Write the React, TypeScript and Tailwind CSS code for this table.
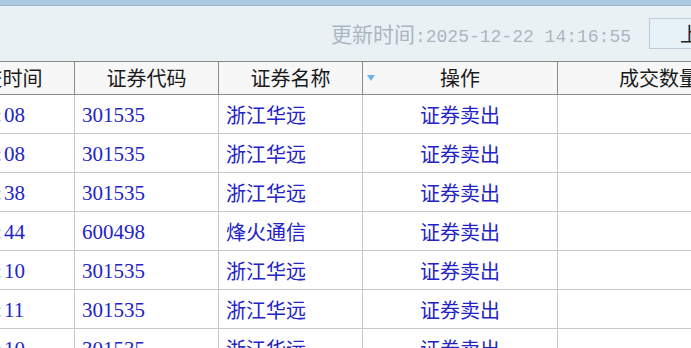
import React from 'react';

// 成交明细表 (横向滚动后的视图)
const rows = [
    { time: '14:16:08', code: '301535', name: '浙江华远', op: '证券卖出' },
    { time: '14:16:08', code: '301535', name: '浙江华远', op: '证券卖出' },
    { time: '14:16:38', code: '301535', name: '浙江华远', op: '证券卖出' },
    { time: '14:16:44', code: '600498', name: '烽火通信', op: '证券卖出' },
    { time: '14:16:10', code: '301535', name: '浙江华远', op: '证券卖出' },
    { time: '14:16:11', code: '301535', name: '浙江华远', op: '证券卖出' },
    { time: '14:16:10', code: '301535', name: '浙江华远', op: '证券卖出' },
];

const cjk = "font-['Noto_Sans_CJK_SC',sans-serif]";
const num = "font-['Liberation_Serif','Noto_Sans_CJK_SC',serif] text-[21px] pt-[3px]";

// 半角冒号占一个数字宽, 模拟宋体等宽效果
function TimeText({ value }: { value: string }) {
    const parts = value.split(':');
    return (
        <span className="whitespace-nowrap">
            {parts.map((p, i) => (
                <React.Fragment key={i}>
                    {i > 0 && <span className="inline-block w-[10px] text-center">:</span>}
                    {p}
                </React.Fragment>
            ))}
        </span>
    );
}

export default function App() {
    return (
        <div className={`w-[691px] h-[348px] overflow-hidden bg-white ${cjk}`}>
            <div className="h-[6px] bg-[#abc8e2] border-b border-[#9fb4c7]" />

            {/* 工具栏 */}
            <div className="h-[55px] bg-[#eaf1f5] flex items-center">
                <div className="flex-1" />
                <div className="text-[#aab6c2] flex items-baseline whitespace-nowrap pt-[2px]">
                    <span className="text-[21px]">更新时间</span>
                    <span className="font-['Liberation_Mono',monospace] text-[18px]">:2025-12-22 14:16:55</span>
                </div>
                <button className="ml-[18px] mr-[-58px] w-[100px] h-[31px] shrink-0 border border-[#bfcbd6] bg-[#e7f1f8] text-[20px] text-[#222] text-left pl-[30px] leading-none whitespace-nowrap">
                    上一页
                </button>
            </div>

            {/* 表格 */}
            <div className="ml-[-69px] w-[900px] text-[20px]">
                <div className="flex h-[34px] bg-[#f7f7f7] border-y border-[#8a8a8a] text-[#1a1a1a]">
                    <div className="w-[144px] shrink-0 border-r border-[#8a8a8a] flex items-center justify-center">成交时间</div>
                    <div className="w-[144px] shrink-0 border-r border-[#8a8a8a] flex items-center justify-center">证券代码</div>
                    <div className="w-[144px] shrink-0 border-r border-[#8a8a8a] flex items-center justify-center">证券名称</div>
                    <div className="relative w-[195px] shrink-0 border-r border-[#8a8a8a] flex items-center justify-center">
                        <span className="absolute left-[4px] top-[13px] w-0 h-0 border-x-[4px] border-x-transparent border-t-[6px] border-t-[#6fb2ea]" />
                        操作
                    </div>
                    <div className="w-[202px] shrink-0 flex items-center justify-center">成交数量</div>
                </div>

                {rows.map((r, i) => (
                    <div key={i} className="flex h-[39px] border-b border-[#c8c8c8] text-[#2323c8]">
                        <div className={`w-[144px] shrink-0 border-r border-[#c8c8c8] flex items-center pl-[11px] ${num}`}>
                            <TimeText value={r.time} />
                        </div>
                        <div className={`w-[144px] shrink-0 border-r border-[#c8c8c8] flex items-center pl-[7px] ${num}`}>{r.code}</div>
                        <div className="w-[144px] shrink-0 border-r border-[#c8c8c8] flex items-center pl-[7px] pt-[2px]">{r.name}</div>
                        <div className="w-[195px] shrink-0 border-r border-[#c8c8c8] flex items-center justify-center pt-[2px]">{r.op}</div>
                        <div className="w-[202px] shrink-0" />
                    </div>
                ))}
            </div>
        </div>
    );
}
